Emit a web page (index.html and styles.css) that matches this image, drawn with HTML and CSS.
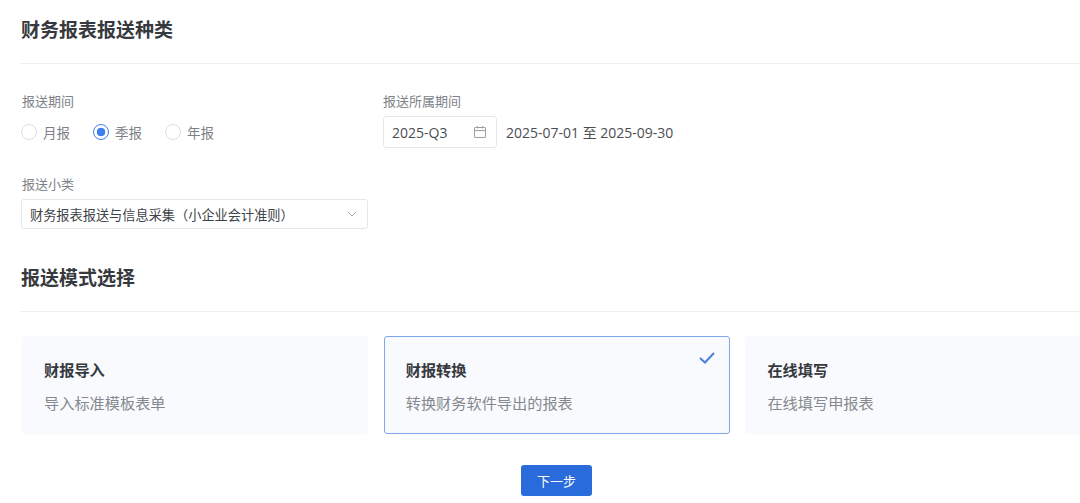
FILE: index.html
```html
<!DOCTYPE html>
<html lang="zh-CN">
<head>
<meta charset="utf-8">
<title>财务报表报送种类</title>
<link rel="stylesheet" href="styles.css">
</head>
<body>
<main class="page">
  <h2 class="section-title first">财务报表报送种类</h2>
  <div class="form-row">
    <div class="field period">
      <div class="label">报送期间</div>
      <div class="radios">
        <label class="radio"><span class="dot"></span>月报</label>
        <label class="radio on"><span class="dot"></span>季报</label>
        <label class="radio"><span class="dot"></span>年报</label>
      </div>
    </div>
    <div class="field">
      <div class="label flush">报送所属期间</div>
      <div class="date-row">
        <div class="input date">
          <span>2025-Q3</span>
          <svg class="cal" width="14" height="14" viewBox="0 0 14 14" fill="none" stroke="#9a9ea5" stroke-width="1"><rect x="1.5" y="2.5" width="11" height="10" rx=".5"/><path d="M1.5 5.5h11M4.5 1v2.5M9.5 1v2.5"/></svg>
        </div>
        <span class="range">2025-07-01 至 2025-09-30</span>
      </div>
    </div>
  </div>
  <div class="field sub">
    <div class="label">报送小类</div>
    <div class="input select">
      <span>财务报表报送与信息采集（小企业会计准则）</span>
      <svg width="10" height="6" viewBox="0 0 10 6" fill="none" stroke="#a9adb3" stroke-width="1"><path d="M1 1l4 4 4-4"/></svg>
    </div>
  </div>
  <h2 class="section-title second">报送模式选择</h2>
  <div class="cards">
    <div class="card">
      <div class="card-title">财报导入</div>
      <div class="card-desc">导入标准模板表单</div>
    </div>
    <div class="card active">
      <div class="card-title">财报转换</div>
      <div class="card-desc">转换财务软件导出的报表</div>
      <svg class="check" width="16" height="12" viewBox="0 0 16 12" fill="none" stroke="#4a7fdc" stroke-width="2"><path d="M1 6l5 4.5L15 1"/></svg>
    </div>
    <div class="card">
      <div class="card-title">在线填写</div>
      <div class="card-desc">在线填写申报表</div>
    </div>
  </div>
  <div class="actions"><button class="next" type="button">下一步</button></div>
</main>
</body>
</html>
```
FILE: styles.css
```css
* { box-sizing: border-box; }
html, body { margin: 0; height: 503px; overflow: hidden; background: #fff; }
body { font-family: "Noto Sans CJK SC", "Noto Sans", sans-serif; color: #3c3f44; }
.page { padding: 17px 0 0 21px; width: 1080px; }
.section-title {
  margin: 0;
  font-size: 19px;
  line-height: 24px;
  font-weight: 700;
  color: #36393e;
  border-bottom: 1px solid #ebedf0;
  padding-bottom: 22px;
}
.second { margin-top: 36px; padding-bottom: 22px; }
.form-row { display: flex; margin-top: 28px; }
.field { display: flex; flex-direction: column; }
.period { width: 362px; }
.label { font-size: 13px; line-height: 17px; color: #7e8288; padding-left: 1px; }
.label.flush { padding-left: 0; }
.radios { display: flex; gap: 23px; margin-top: 14px; }
.radio { display: flex; align-items: center; font-size: 13.5px; line-height: 18px; color: #7d8186; }
.dot {
  width: 16px; height: 16px; margin-right: 6px;
  border: 1px solid #dfe1e5; border-radius: 50%; background: #fff;
}
.on .dot { border-color: #3f7fee; background: radial-gradient(circle, #3f7fee 0 4px, #fff 4.6px); }
.date-row { display: flex; align-items: center; margin-top: 7px; }
.input { display: flex; align-items: center; justify-content: space-between; border: 1px solid #e4e6ea; border-radius: 3px; background: #fff; }
.date, .range { font-family: "Open Sans", "Noto Sans CJK SC", sans-serif; font-size: 14px; color: #4a4d52; }
.date { width: 114px; height: 32px; padding: 0 9px 0 8px; }
.range { margin-left: 9px; }
.sub { margin-top: 27px; }
.select { width: 347px; height: 30px; margin-top: 7px; padding: 0 10px 0 8px; font-size: 13.2px; color: #404348; }
.cards { display: flex; gap: 15.7px; margin-top: 24px; padding-left: 1px; }
.card {
  position: relative; flex: 0 0 346px; height: 98px; padding: 23px 22px 0;
  background: #f8fafd; border-radius: 3px;
}
.card.active { border: 1px solid #7ea6ec; padding: 22px 21px 0; }
.card-title { font-size: 15.2px; line-height: 21px; font-weight: 700; color: #36393e; }
.card-desc { margin-top: 12px; font-size: 15.2px; line-height: 21px; color: #85898f; }
.check { position: absolute; top: 15px; right: 14px; }
.actions { display: flex; justify-content: center; margin-top: 31px; margin-left: -21px; width: 1080px; padding-left: 33px; }
.next {
  width: 71px; height: 31px; border: 0; border-radius: 3px; background: #2a6bdc; color: #fff;
  font: 13px/31px "Noto Sans CJK SC", sans-serif; padding: 0;
}
```
